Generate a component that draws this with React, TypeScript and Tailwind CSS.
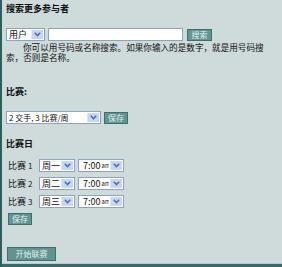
import React from "react";

function Arrow() {
  return (
    <div className="flex h-full w-[12px] items-center justify-center bg-[#c6d6f4] border-l border-[#dfe8f8]">
      <svg width="7" height="5" viewBox="0 0 7 5">
        <path d="M0.8 0.8 L3.5 3.6 L6.2 0.8" fill="none" stroke="#4d6db8" strokeWidth="1.5" />
      </svg>
    </div>
  );
}

function Sel({ w, children }: { w: string; children: React.ReactNode }) {
  return (
    <div className={`flex h-[13px] items-stretch border border-[#8aa3bf] bg-white ${w}`}>
      <div className="flex flex-1 items-center pl-[2px] text-[9px] leading-[11px] text-[#111] whitespace-nowrap overflow-hidden">
        {children}
      </div>
      <div className="p-[1px] flex">
        <Arrow />
      </div>
    </div>
  );
}

function Btn({ w, h, children }: { w: string; h: string; children: React.ReactNode }) {
  return (
    <div
      className={`flex items-center justify-center border border-[#3f6f6c] bg-[#5f9491] text-[8px] leading-[10px] text-[#e4f0ef] ${w} ${h}`}
    >
      {children}
    </div>
  );
}

function Time() {
  return (
    <Sel w="w-[46px]">
      <span className="pl-[2px]">7:00</span>
      <span className="text-[6px] ml-[1px]">am</span>
    </Sel>
  );
}

export default function App() {
  return (
    <div
      className="w-[282px] h-[267px] bg-[#cfdbdb] border-l-2 border-[#2f5f5c] flex flex-col text-[#111]"
      style={{ fontFamily: '"Noto Sans CJK SC", "Noto Sans", sans-serif' }}
    >
      <div className="flex-1 flex flex-col pl-[4px] pt-[4px]">
        <div className="text-[9px] leading-[10px] font-bold">搜索更多参与者</div>

        <div className="mt-[14px] flex items-center">
          <Sel w="w-[39px]">用户</Sel>
          <div className="ml-[3px] h-[13px] w-[135px] border border-[#8aa3bf] bg-white" />
          <div className="ml-[4px]">
            <Btn w="w-[25px]" h="h-[12px]">搜索</Btn>
          </div>
        </div>

        <div className="text-[8.6px] leading-[10px] mt-[1px] whitespace-nowrap">
          <div className="pl-[17px]">你可以用号码或名称搜索。如果你输入的是数字，就是用号码搜</div>
          <div>索，否则是名称。</div>
        </div>

        <div className="mt-[25px] text-[9px] leading-[10px] font-bold">比赛:</div>

        <div className="mt-[14px] flex items-center">
          <Sel w="w-[95px]">
            <span className="text-[8px]">2 交手, 3 比赛/周</span>
          </Sel>
          <div className="ml-[3px]">
            <Btn w="w-[24px]" h="h-[12px]">保存</Btn>
          </div>
        </div>

        <div className="mt-[15px] text-[9px] leading-[10px] font-bold">比赛日</div>

        <div className="mt-[10px] flex flex-col gap-[5px] pl-[2px]">
          {[
            ["1", "周一"],
            ["2", "周二"],
            ["3", "周三"],
          ].map(([n, d]) => (
            <div key={n} className="flex items-center h-[13px]">
              <div className="w-[31px] text-[9px] leading-[10px] whitespace-nowrap">
                比赛 <span className="text-[8px]">{n}</span>
              </div>
              <Sel w="w-[36px]">{d}</Sel>
              <div className="ml-[3px]">
                <Time />
              </div>
            </div>
          ))}
        </div>

        <div className="mt-[5px] pl-[2px]">
          <Btn w="w-[24px]" h="h-[12px]">保存</Btn>
        </div>

        <div className="mt-[22px] pl-[1px]">
          <Btn w="w-[49px]" h="h-[14px]">开始联赛</Btn>
        </div>
      </div>
      <div className="h-[1px] bg-[#b9cccc]" />
      <div className="h-[3px] bg-[#3a6a67]" />
    </div>
  );
}
